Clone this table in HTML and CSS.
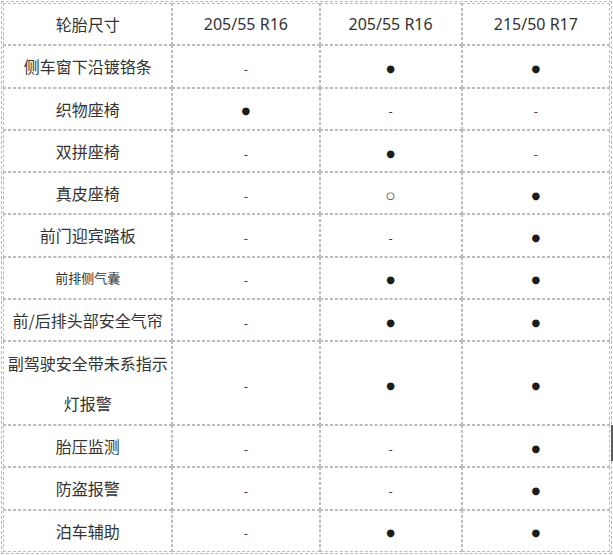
FILE: index.html
```html
<!DOCTYPE html>
<html lang="zh-CN">
<head>
<meta charset="utf-8">
<title>配置表</title>
<link rel="stylesheet" href="styles.css">
</head>
<body>
<table class="spec">
  <colgroup>
    <col class="c1"><col class="c2"><col class="c3"><col class="c4">
  </colgroup>
  <tr><td>轮胎尺寸</td><td class="num">205/55 R16</td><td class="num">205/55 R16</td><td class="num">215/50 R17</td></tr>
  <tr><td>侧车窗下沿镀铬条</td><td><span class="no">-</span></td><td><span class="yes">●</span></td><td><span class="yes">●</span></td></tr>
  <tr><td>织物座椅</td><td><span class="yes">●</span></td><td><span class="no">-</span></td><td><span class="no">-</span></td></tr>
  <tr><td>双拼座椅</td><td><span class="no">-</span></td><td><span class="yes">●</span></td><td><span class="no">-</span></td></tr>
  <tr><td>真皮座椅</td><td><span class="no">-</span></td><td><span class="opt">○</span></td><td><span class="yes">●</span></td></tr>
  <tr><td>前门迎宾踏板</td><td><span class="no">-</span></td><td><span class="no">-</span></td><td><span class="yes">●</span></td></tr>
  <tr><td class="small">前排侧气囊</td><td><span class="no">-</span></td><td><span class="yes">●</span></td><td><span class="yes">●</span></td></tr>
  <tr><td>前/后排头部安全气帘</td><td><span class="no">-</span></td><td><span class="yes">●</span></td><td><span class="yes">●</span></td></tr>
  <tr class="tall"><td>副驾驶安全带未系指示灯报警</td><td><span class="no">-</span></td><td><span class="yes">●</span></td><td><span class="yes">●</span></td></tr>
  <tr><td>胎压监测</td><td><span class="no">-</span></td><td><span class="no">-</span></td><td><span class="yes">●</span></td></tr>
  <tr><td>防盗报警</td><td><span class="no">-</span></td><td><span class="no">-</span></td><td><span class="yes">●</span></td></tr>
  <tr><td>泊车辅助</td><td><span class="no">-</span></td><td><span class="yes">●</span></td><td><span class="yes">●</span></td></tr>
</table>
<div class="scroll-thumb"></div>
</body>
</html>
```

FILE: styles.css
```css
html, body {
  margin: 0;
  padding: 0;
  background: #fff;
}
body {
  position: relative;
  width: 613px;
  height: 555px;
  overflow: hidden;
  font-family: "Noto Sans", "Noto Sans CJK SC", sans-serif;
  color: #333;
}
.spec {
  margin: 1px 0 0 1px;
  width: 611px;
  border: 1px dashed #b8b8b8;
  border-collapse: separate;
  border-spacing: 0;
  padding: 1px;
  table-layout: fixed;
}
.c1 { width: 169px; }
.c2 { width: 147px; }
.c3 { width: 142px; }
.c4 { width: 148px; }
.spec td {
  box-sizing: border-box;
  height: 42.25px;
  border: 1px dashed #bcbcbc;
  text-align: center;
  vertical-align: middle;
  padding: 0 2px;
  font-size: 16px;
  line-height: 20px;
  font-family: "Noto Sans CJK SC", sans-serif;
}
.spec td.num {
  font-family: "Noto Sans", "Noto Sans CJK SC", sans-serif;
  font-size: 16px;
}
.spec td.small {
  font-size: 13px;
}
.tall td {
  height: 84px;
  line-height: 40px;
}
.yes, .opt, .no {
  display: inline-block;
  vertical-align: middle;
  line-height: 14px;
}
.yes {
  font-family: "DejaVu Sans", sans-serif;
  font-size: 10px;
  color: #1c1c1c;
}
.opt {
  font-family: "DejaVu Sans", sans-serif;
  font-size: 10px;
  color: #222;
}
.no {
  font-family: "Noto Sans", sans-serif;
  font-size: 13px;
  color: #444;
}
.scroll-thumb {
  position: absolute;
  right: 0;
  top: 425px;
  width: 2px;
  height: 36px;
  background: #5a5a5a;
}
```
